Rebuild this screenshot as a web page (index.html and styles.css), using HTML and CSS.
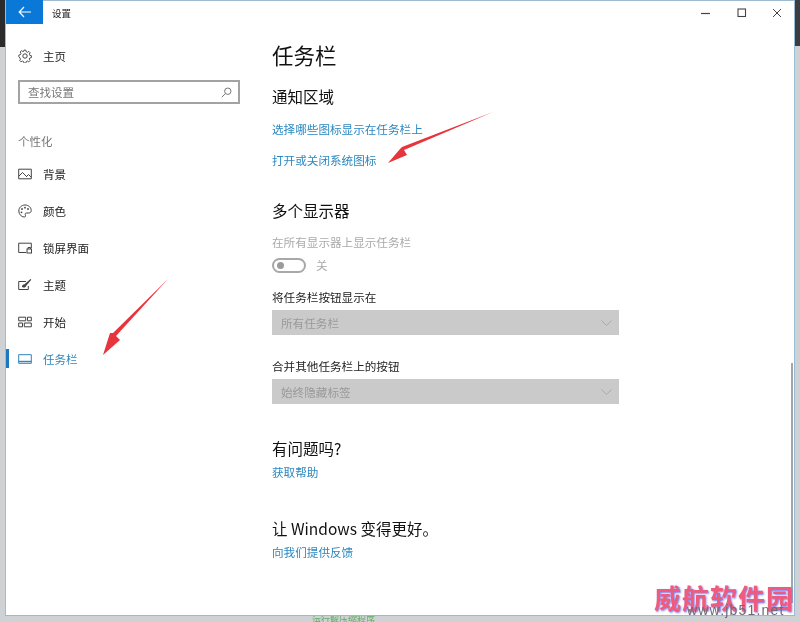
FILE: index.html
```html
<!DOCTYPE html>
<html lang="zh-CN">
<head>
<meta charset="utf-8">
<title>设置</title>
<link rel="stylesheet" href="styles.css">
</head>
<body>
<div class="desktop">
  <div class="desk-dark-left"></div>
  <div class="desk-dark-right"></div>
  <div class="desk-text">运行解压缩程序</div>
  <div class="window">
    <header class="titlebar">
      <div class="back">
        <svg width="14" height="12" viewBox="0 0 14 12"><path d="M6 1 1.2 6 6 11M1.2 6H13" fill="none" stroke="#fff" stroke-width="1.2"/></svg>
      </div>
      <span class="app-title">设置</span>
      <div class="controls">
        <svg width="10" height="10" viewBox="0 0 10 10"><path d="M0 5.5h9" stroke="#444" stroke-width="1.2"/></svg>
        <svg width="10" height="10" viewBox="0 0 10 10"><rect x="1" y="1" width="7.5" height="7.5" fill="none" stroke="#444" stroke-width="1.1"/></svg>
        <svg width="10" height="10" viewBox="0 0 10 10"><path d="M1 1l8 8M9 1 1 9" stroke="#444" stroke-width="1"/></svg>
      </div>
    </header>
    <div class="content">
      <nav class="sidebar">
        <div class="nav-item home">
          <svg class="ico" width="14" height="14" viewBox="0 0 14 14"><circle cx="7" cy="7" r="2.2" fill="none" stroke="#444" stroke-width="1"/><path d="M6 .8h2l.4 1.7 1.3.6 1.5-.9 1.4 1.4-.9 1.5.6 1.3 1.7.4v2l-1.7.4-.6 1.3.9 1.5-1.4 1.4-1.5-.9-1.3.6-.4 1.7H6l-.4-1.7-1.3-.6-1.5.9-1.4-1.4.9-1.5-.6-1.3L.5 8V6l1.7-.4.6-1.3-.9-1.5 1.4-1.4 1.5.9 1.3-.6z" transform="translate(.4 .4) scale(.93)" fill="none" stroke="#444" stroke-width="1"/></svg>
          <span>主页</span>
        </div>
        <div class="search">
          <span>查找设置</span>
          <svg width="11" height="11" viewBox="0 0 11 11"><circle cx="6.8" cy="4.2" r="3.2" fill="none" stroke="#777" stroke-width="1"/><path d="M4.5 6.5.8 10.2" stroke="#777" stroke-width="1"/></svg>
        </div>
        <div class="group">个性化</div>
        <div class="nav-item">
          <svg class="ico" width="14" height="12" viewBox="0 0 14 12"><path d="M.7 1.2h12.6v9.6H.7z" fill="none" stroke="#444"/><path d="M1 8l3.5-3.5L9 9M9 8l1.5-1.5L13 9" fill="none" stroke="#444"/></svg>
          <span>背景</span>
        </div>
        <div class="nav-item">
          <svg class="ico" width="14" height="14" viewBox="0 0 14 14"><path d="M7 1C3.5 1 .8 3.6.8 7s2.7 6 5.5 6c1.6 0 1.4-1.4 1-2.2-.4-1 .2-1.8 1.2-1.8h2.3c1.500 0 2.400-1 2.400-2.500C13.200 3.300 10.500 1 7 1z" fill="none" stroke="#444"/><circle cx="4" cy="5" r=".9" fill="#444"/><circle cx="7" cy="3.700" r=".9" fill="#444"/><circle cx="10" cy="5" r=".9" fill="#444"/><circle cx="3.500" cy="8.300" r=".9" fill="#444"/></svg>
          <span>颜色</span>
        </div>
        <div class="nav-item">
          <svg class="ico" width="14" height="12" viewBox="0 0 14 12"><path d="M8 10.500H.7V1.200h12.600V6" fill="none" stroke="#444"/><rect x="9" y="7" width="4.500" height="4" fill="none" stroke="#444"/><path d="M10 7V5.500h2.500V7" fill="none" stroke="#444"/></svg>
          <span>锁屏界面</span>
        </div>
        <div class="nav-item">
          <svg class="ico" width="14" height="13" viewBox="0 0 14 13"><path d="M8 3.500H.7v8h9.600V8" fill="none" stroke="#444"/><path d="M4 9c0-2 1-2.500 2.200-2.500L12.500 1l.8.800L8 8c0 1.500-2 2-4 1z" fill="#444"/></svg>
          <span>主题</span>
        </div>
        <div class="nav-item">
          <svg class="ico" width="14" height="12" viewBox="0 0 14 12"><path d="M.7 1.200h7v3.600h-7zM9.500 1.200h3.800v3.600H9.500zM.7 7h3.800v3.800H.7zM6.300 7h7v3.800h-7z" fill="none" stroke="#444"/></svg>
          <span>开始</span>
        </div>
        <div class="nav-item active">
          <svg class="ico" width="14" height="10" viewBox="0 0 14 10"><path d="M.7.700h12.600v8.600H.7z" fill="none" stroke="#2f86b8"/><path d="M.7 7.500h12.600" stroke="#2f86b8" stroke-width="1.400"/></svg>
          <span>任务栏</span>
        </div>
      </nav>
      <main class="main">
        <h1>任务栏</h1>
        <h2 class="first">通知区域</h2>
        <a class="link link-a">选择哪些图标显示在任务栏上</a>
        <a class="link link-b">打开或关闭系统图标</a>
        <h2 class="multi">多个显示器</h2>
        <div class="muted">在所有显示器上显示任务栏</div>
        <div class="toggle-row">
          <span class="toggle"><i></i></span>
          <span class="toggle-label">关</span>
        </div>
        <label class="field-label">将任务栏按钮显示在</label>
        <div class="select">
          <span>所有任务栏</span>
          <svg width="11" height="6" viewBox="0 0 11 6"><path d="M.5.500l5 5 5-5" fill="none" stroke="#aaa"/></svg>
        </div>
        <label class="field-label second">合并其他任务栏上的按钮</label>
        <div class="select">
          <span>始终隐藏标签</span>
          <svg width="11" height="6" viewBox="0 0 11 6"><path d="M.5.500l5 5 5-5" fill="none" stroke="#aaa"/></svg>
        </div>
        <h2 class="help">有问题吗?</h2>
        <a class="link link-c">获取帮助</a>
        <h2 class="better">让 Windows 变得更好。</h2>
        <a class="link link-c">向我们提供反馈</a>
      </main>
    </div>
    <div class="scroll-thumb"></div>
  </div>
  <svg class="arrows" width="800" height="622" viewBox="0 0 800 622">
    <path d="M493 112 404 150 407 155 388 163 400 149 402 147Z" fill="#e8343c"/>
    <path d="M168 279 116 336 120 340 103 355 110 333 113 333Z" fill="#e8343c"/>
  </svg>
  <div class="watermark">威航软件园</div>
  <div class="watermark-url">www.jb51.net</div>
</div>
</body>
</html>
```
FILE: styles.css
```css
* { box-sizing: border-box; }
html, body { margin: 0; padding: 0; }
body {
  width: 800px;
  height: 622px;
  overflow: hidden;
  font-family: "Noto Sans CJK SC", "Liberation Sans", sans-serif;
}
.desktop {
  position: relative;
  width: 800px;
  height: 622px;
  background: #cfd2d4;
  overflow: hidden;
  filter: blur(0.5px);
}
.desk-dark-left {
  position: absolute; left: 0; top: 0;
  width: 5px; height: 47px;
  background: #2b2b2b;
}
.desk-dark-right {
  position: absolute; right: 0; top: 0;
  width: 5px; height: 46px;
  background: #3a3e42;
}
.desk-text {
  position: absolute; left: 312px; top: 614px;
  font-size: 9px; line-height: 12px;
  color: #5fae64;
}
.window {
  position: absolute;
  left: 5px; top: 0;
  width: 790px; height: 616px;
  background: #fff;
  border: 1px solid #9dbcd2;
  border-bottom-color: #a9b6c0;
  display: flex;
  flex-direction: column;
}
.titlebar {
  display: flex;
  align-items: center;
  height: 23px;
  flex: none;
}
.back {
  width: 37px; height: 24px;
  margin-top: -1px;
  background: #0a78d7;
  display: flex; align-items: center; justify-content: center;
}
.app-title {
  margin-left: 9px;
  font-size: 9.5px;
  color: #222;
}
.controls {
  margin-left: auto;
  margin-right: 12px;
  display: flex;
  gap: 25.5px;
  align-items: center;
}
.controls svg { display: block; }
.content { display: flex; flex: 1; min-height: 0; }
.sidebar {
  width: 266px;
  flex: none;
  padding-top: 13px;
  display: flex;
  flex-direction: column;
}
.nav-item {
  position: relative;
  display: flex;
  align-items: center;
  height: 37px;
  padding-left: 12px;
  font-size: 11.5px;
  color: #222;
}
.nav-item.home { height: 37px; }
.nav-item .ico { flex: none; }
.nav-item span { position: absolute; left: 37px; }
.nav-item.active { color: #2f86b8; }
.nav-item.active::before {
  content: "";
  position: absolute;
  left: 0; top: 9px;
  width: 3px; height: 19px;
  background: #1c78c0;
}
.search {
  margin: 6px 0 0 12px;
  width: 222px;
  height: 24px;
  border: 2px solid #a3a3a3;
  display: flex;
  align-items: center;
  justify-content: space-between;
  padding: 0 6px 0 8px;
  font-size: 11.5px;
  color: #777;
}
.group {
  margin: 29px 0 6px 12px;
  height: 16px;
  line-height: 16px;
  font-size: 11.5px;
  color: #777;
}
.main {
  flex: 1;
  display: flex;
  flex-direction: column;
  align-items: flex-start;
  padding-top: 16px;
}
h1 {
  margin: 0;
  font-size: 21.5px;
  line-height: 30px;
  font-weight: 400;
  color: #111;
}
h2 {
  margin: 0;
  font-size: 15.5px;
  line-height: 22px;
  font-weight: 400;
  color: #111;
}
h2.first { margin-top: 15px; }
h2.multi { margin-top: 31px; }
h2.help { margin-top: 33px; }
h2.better { margin-top: 37px; }
.link {
  font-size: 11.6px;
  line-height: 16px;
  color: #2b88c0;
}
.link-a { margin-top: 14px; }
.link-b { margin-top: 15px; }
.link-c { margin-top: 5px; }
.muted {
  margin-top: 13px;
  font-size: 11.6px;
  line-height: 16px;
  color: #aaa;
}
.toggle-row {
  display: flex;
  align-items: center;
  margin-top: 7px;
  height: 16px;
}
.toggle {
  width: 34px; height: 15px;
  border: 2px solid #a8a8a8;
  border-radius: 8px;
  display: flex;
  align-items: center;
  padding-left: 3px;
}
.toggle i {
  width: 7px; height: 7px;
  border-radius: 50%;
  background: #9b9b9b;
  display: block;
}
.toggle-label {
  margin-left: 10px;
  font-size: 11.6px;
  color: #aaa;
}
.field-label {
  margin-top: 16px;
  font-size: 11.6px;
  line-height: 16px;
  color: #222;
}
.field-label.second { margin-top: 23px; }
.select {
  margin-top: 5px;
  width: 347px;
  height: 25px;
  background: #cacaca;
  display: flex;
  align-items: center;
  justify-content: space-between;
  padding: 0 7px 0 9px;
  font-size: 11.6px;
  color: #999;
}
.scroll-thumb {
  position: absolute;
  right: 1px; top: 362px;
  width: 2px; height: 240px;
  background: #a0a6aa;
}
.arrows { position: absolute; left: 0; top: 0; }
.watermark {
  position: absolute;
  left: 654px; top: 582px;
  font-family: "Noto Sans CJK SC", sans-serif;
  font-size: 27px;
  line-height: 32px;
  font-weight: 700;
  white-space: nowrap;
  letter-spacing: 1px;
  color: #ef5b7c;
  text-shadow: 1px 1px 2px #7a7aee;
}
.watermark-url {
  position: absolute;
  left: 687px; top: 603px;
  font-family: "Liberation Sans", sans-serif;
  font-size: 14px;
  line-height: 14px;
  letter-spacing: 1.2px;
  color: #6d6a78;
}
```
